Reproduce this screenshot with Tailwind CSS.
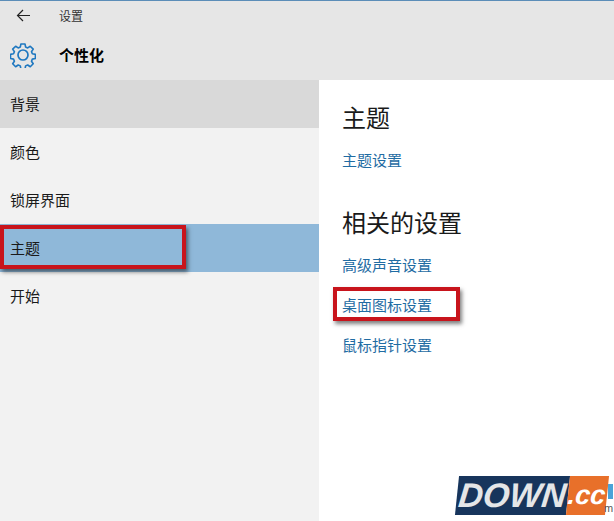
<!DOCTYPE html>
<html lang="zh-CN">
  <head>
    <meta charset="UTF-8" />
    <title>设置</title>
    <script src="https://cdn.jsdelivr.net/npm/@tailwindcss/browser@4"></script>
  </head>
  <body class="relative w-[614px] h-[521px] overflow-hidden bg-white font-['Noto_Sans_CJK_SC','Noto_Sans',sans-serif] text-[15px] text-[#1a1a1a]">
    <!-- title bar -->
    <header class="h-[80px] bg-[#e6e6e6] border-t border-[#5b8db8]">
      <div class="h-[29px] flex items-center">
        <div class="w-[59px] pl-[16px] flex items-center">
          <svg width="15" height="13" viewBox="0 0 15 13" fill="none" stroke="#222" stroke-width="1.2"><path d="M14 6.5H1.5M7 1 1.5 6.5 7 12" /></svg>
        </div>
        <span class="text-[12px] text-[#333]">设置</span>
      </div>
      <div class="h-[50px] flex items-center">
        <div class="w-[59px] pl-[10px] flex items-center">
          <svg width="26" height="26" viewBox="0 0 26 26" fill="none" stroke="#1f78c0" stroke-width="1.7" stroke-linejoin="round">
            <path d="M10.8 1.5h4.4l.6 3.2 2.2.9 2.7-1.8 3.1 3.1-1.8 2.7.9 2.2 3.2.6v4.4l-3.2.6-.9 2.2 1.8 2.7-3.1 3.1-2.7-1.8-2.2.9-.6 3.2h-4.4l-.6-3.2-2.2-.9-2.7 1.8-3.1-3.1 1.8-2.7-.9-2.2-3.2-.6v-4.4l3.2-.6.9-2.2-1.8-2.7 3.1-3.1 2.7 1.8 2.2-.9z" transform="translate(.6 .6) scale(.95)" />
            <circle cx="13" cy="13" r="5" />
          </svg>
        </div>
        <span class="text-[15px] font-bold text-black">个性化</span>
      </div>
    </header>

    <div class="flex h-[441px]">
      <!-- sidebar -->
      <nav class="w-[319px] bg-[#f2f2f2]">
        <div class="h-[48px] flex items-center pl-[10px] bg-[#d9d9d9]">背景</div>
        <div class="h-[48px] flex items-center pl-[10px]">颜色</div>
        <div class="h-[48px] flex items-center pl-[10px]">锁屏界面</div>
        <div class="h-[48px] flex items-center pl-[10px] bg-[#8fb8d9]">主题</div>
        <div class="h-[48px] flex items-center pl-[10px]">开始</div>
      </nav>

      <!-- content -->
      <main class="flex-1 pl-[23px] bg-white">
        <h2 class="text-[24px] leading-[32px] mt-[21px]">主题</h2>
        <a class="block mt-[17px] leading-[20px] text-[#1f6ca3]">主题设置</a>
        <h2 class="text-[24px] leading-[32px] mt-[36px]">相关的设置</h2>
        <a class="block mt-[17px] leading-[20px] text-[#1f6ca3]">高级声音设置</a>
        <a class="block mt-[20px] leading-[20px] text-[#1f6ca3]">桌面图标设置</a>
        <a class="block mt-[20px] leading-[20px] text-[#1f6ca3]">鼠标指针设置</a>
      </main>
    </div>

    <!-- red highlight boxes -->
    <div class="absolute left-0 top-[225px] w-[186px] h-[44px] border-[4px] border-[#c8141c] shadow-[2px_3px_4px_rgba(0,0,0,.5)]"></div>
    <div class="absolute left-[333px] top-[287px] w-[127px] h-[34px] border-[4px] border-[#c8141c] shadow-[2px_3px_4px_rgba(0,0,0,.5)]"></div>

    <!-- watermark logo -->
    <div class="absolute left-[457px] top-[476px] flex h-[39px] -skew-x-6 font-['Liberation_Sans',sans-serif] font-bold italic leading-[39px]">
      <div class="w-[111px] bg-[#17355c] text-[34px] text-[#e4e6e8] text-center">DOWN</div>
      <div class="w-[39px] bg-[#e8702a] text-[27px] text-white whitespace-nowrap">.cc</div>
    </div>
    <div class="absolute left-[608px] top-[484px] w-[5px] h-[15px] bg-[#4aa3d8]"></div>
    <span class="absolute left-[604px] top-[501px] text-[11px] leading-[14px] text-[#555] font-['Liberation_Sans',sans-serif]">m</span>
  </body>
</html>
